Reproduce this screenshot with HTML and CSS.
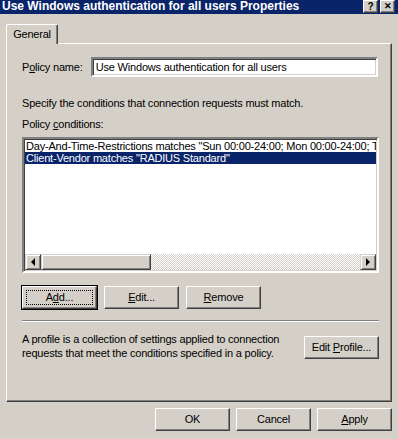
FILE: index.html
```html
<!DOCTYPE html>
<html lang="en">
<head>
    <meta charset="UTF-8">
    <title>Use Windows authentication for all users Properties</title>
    <link rel="stylesheet" href="styles.css">
</head>
<body>
    <div class="window">
        <div class="titlebar">
            <span class="title">Use Windows authentication for all users Properties</span>
            <div class="title-buttons">
                <span class="cap-btn">?</span>
                <span class="cap-btn close">&#x2715;</span>
            </div>
        </div>

        <div class="tabs">
            <div class="tab active">General</div>
        </div>

        <div class="panel">
            <div class="name-row">
                <label class="name-label">P<u>o</u>licy name:</label>
                <div class="textbox">Use Windows authentication for all users</div>
            </div>

            <p class="hint">Specify the conditions that connection requests must match.</p>
            <p class="list-label">Policy <u>c</u>onditions:</p>

            <div class="listbox">
                <div class="list-items">
                    <div class="list-item">Day-And-Time-Restrictions matches "Sun 00:00-24:00; Mon 00:00-24:00; Tue 00:00-24:00;</div>
                    <div class="list-item selected">Client-Vendor matches "RADIUS Standard"</div>
                </div>
                <div class="hscroll">
                    <span class="sb-btn"><span class="arrow left"></span></span>
                    <span class="sb-thumb"></span>
                    <span class="sb-track"></span>
                    <span class="sb-btn"><span class="arrow right"></span></span>
                </div>
            </div>

            <div class="cond-buttons">
                <button class="btn default"><span class="focus">A<u>d</u>d...</span></button>
                <button class="btn"><u>E</u>dit...</button>
                <button class="btn"><u>R</u>emove</button>
            </div>

            <div class="separator"></div>

            <div class="profile-row">
                <p class="profile-text">A profile is a collection of settings applied to connection<br>requests that meet the conditions specified in a policy.</p>
                <button class="btn">Edit <u>P</u>rofile...</button>
            </div>
        </div>

        <div class="dialog-buttons">
            <button class="btn">OK</button>
            <button class="btn">Cancel</button>
            <button class="btn"><u>A</u>pply</button>
        </div>
    </div>
</body>
</html>
```

FILE: styles.css
```css
body {
    margin: 0;
    padding: 0;
    background-color: #d4d0c8;
    font-family: "Liberation Sans", Arial, sans-serif;
    font-size: 11px;
    letter-spacing: -0.2px;
    color: #000;
}

.window {
    width: 398px;
    height: 439px;
    display: flex;
    flex-direction: column;
    background-color: #d4d0c8;
    overflow: hidden;
}

u {
    text-decoration-thickness: 1px;
    text-underline-offset: 1px;
}

/* Title bar */
.titlebar {
    height: 14px;
    background-color: #0a246a;
    display: flex;
    align-items: flex-start;
    justify-content: space-between;
    padding-left: 2px;
    padding-right: 3px;
}

.title {
    color: #fff;
    font-weight: bold;
    font-size: 12px;
    line-height: 13px;
    letter-spacing: 0;
}

.title-buttons {
    display: flex;
    gap: 2px;
}

.cap-btn {
    width: 13px;
    height: 11px;
    background-color: #d4d0c8;
    border: 1px solid;
    border-color: #fff #404040 #404040 #fff;
    box-shadow: inset -1px -1px 0 #808080;
    font-weight: bold;
    font-size: 10px;
    line-height: 11px;
    text-align: center;
    letter-spacing: 0;
}

.cap-btn.close {
    font-size: 9px;
}

/* Tabs */
.tabs {
    display: flex;
    margin-top: 10px;
    padding-left: 6px;
    height: 20px;
}

.tab {
    width: 50px;
    height: 19px;
    border: 1px solid;
    border-bottom: none;
    border-color: #fff #404040 #fff #fff;
    border-radius: 2px 2px 0 0;
    box-shadow: inset -1px 0 0 #808080;
    background-color: #d4d0c8;
    text-align: center;
    line-height: 19px;
    position: relative;
    z-index: 1;
}

/* Main panel */
.panel {
    margin-left: 6px;
    margin-top: -1px;
    width: 356px;
    height: 357px;
    border: 1px solid;
    border-color: #fff #404040 #404040 #fff;
    box-shadow: inset -1px -1px 0 #808080;
    padding: 0 13px 0 15px;
}

.name-row {
    display: flex;
    align-items: center;
    margin-top: 12px;
    height: 22px;
}

.name-label {
    width: 69px;
}

.textbox {
    width: 281px;
    height: 16px;
    background-color: #fff;
    border: 2px solid;
    border-color: #808080 #fff #fff #808080;
    box-shadow: inset 1px 1px 0 #404040, inset -1px -1px 0 #d4d0c8;
    padding-left: 3px;
    line-height: 16px;
    white-space: nowrap;
}

.hint {
    margin: 19px 0 0 0;
    line-height: 13px;
}

.list-label {
    margin: 8px 0 0 0;
    line-height: 13px;
}

.listbox {
    margin-top: 6px;
    width: 351px;
    height: 130px;
    border: 2px solid;
    border-color: #808080 #fff #fff #808080;
    box-shadow: inset 1px 1px 0 #404040, inset -1px -1px 0 #d4d0c8;
    background-color: #fff;
    padding: 1px;
    display: flex;
    flex-direction: column;
}

.list-items {
    flex: 1;
    overflow: hidden;
}

.list-item {
    height: 12px;
    line-height: 12px;
    padding-left: 1px;
    white-space: nowrap;
    overflow: hidden;
}

.list-item.selected {
    background-color: #0a246a;
    color: #fff;
}

.hscroll {
    display: flex;
    height: 16px;
}

.sb-btn {
    width: 12px;
    height: 12px;
    background-color: #d4d0c8;
    border: 1px solid;
    border-color: #d4d0c8 #404040 #404040 #d4d0c8;
    box-shadow: inset 1px 1px 0 #fff, inset -1px -1px 0 #808080;
    padding: 1px;
    display: flex;
    align-items: center;
    justify-content: center;
}

.sb-thumb {
    width: 106px;
    height: 12px;
    background-color: #d4d0c8;
    border: 1px solid;
    border-color: #d4d0c8 #404040 #404040 #d4d0c8;
    box-shadow: inset 1px 1px 0 #fff, inset -1px -1px 0 #808080;
    padding: 1px;
}

.sb-track {
    flex: 1;
    background: repeating-conic-gradient(#fff 0 25%, #d4d0c8 0 50%) 0 0 / 2px 2px;
}

.arrow {
    width: 0;
    height: 0;
    border-top: 4px solid transparent;
    border-bottom: 4px solid transparent;
}

.arrow.left {
    border-right: 4px solid #000;
}

.arrow.right {
    border-left: 4px solid #000;
}

/* Buttons */
.btn {
    width: 75px;
    height: 23px;
    background-color: #d4d0c8;
    border: 1px solid;
    border-color: #fff #404040 #404040 #fff;
    box-shadow: inset -1px -1px 0 #808080;
    font-family: "Liberation Sans", Arial, sans-serif;
    font-size: 11px;
    letter-spacing: -0.2px;
    color: #000;
    padding: 0;
    line-height: 21px;
}

.btn.default {
    outline: 1px solid #000;
    outline-offset: 0;
}

.btn.default .focus {
    display: inline-block;
    width: 65px;
    height: 13px;
    line-height: 13px;
    outline: 1px dotted #000;
}

.cond-buttons {
    display: flex;
    gap: 7px;
    margin-top: 13px;
}

.separator {
    margin-top: 11px;
    width: 357px;
    height: 0;
    border-top: 1px solid #808080;
    border-bottom: 1px solid #fff;
}

.profile-row {
    display: flex;
    justify-content: space-between;
    align-items: flex-start;
    margin-top: 9px;
}

.profile-text {
    margin: 0;
    line-height: 14px;
    padding-top: 1px;
}

.profile-row .btn {
    margin-top: 5px;
    margin-right: -1px;
}

.dialog-buttons {
    display: flex;
    justify-content: flex-end;
    gap: 6px;
    padding-right: 6px;
    margin-top: 6px;
}
```
